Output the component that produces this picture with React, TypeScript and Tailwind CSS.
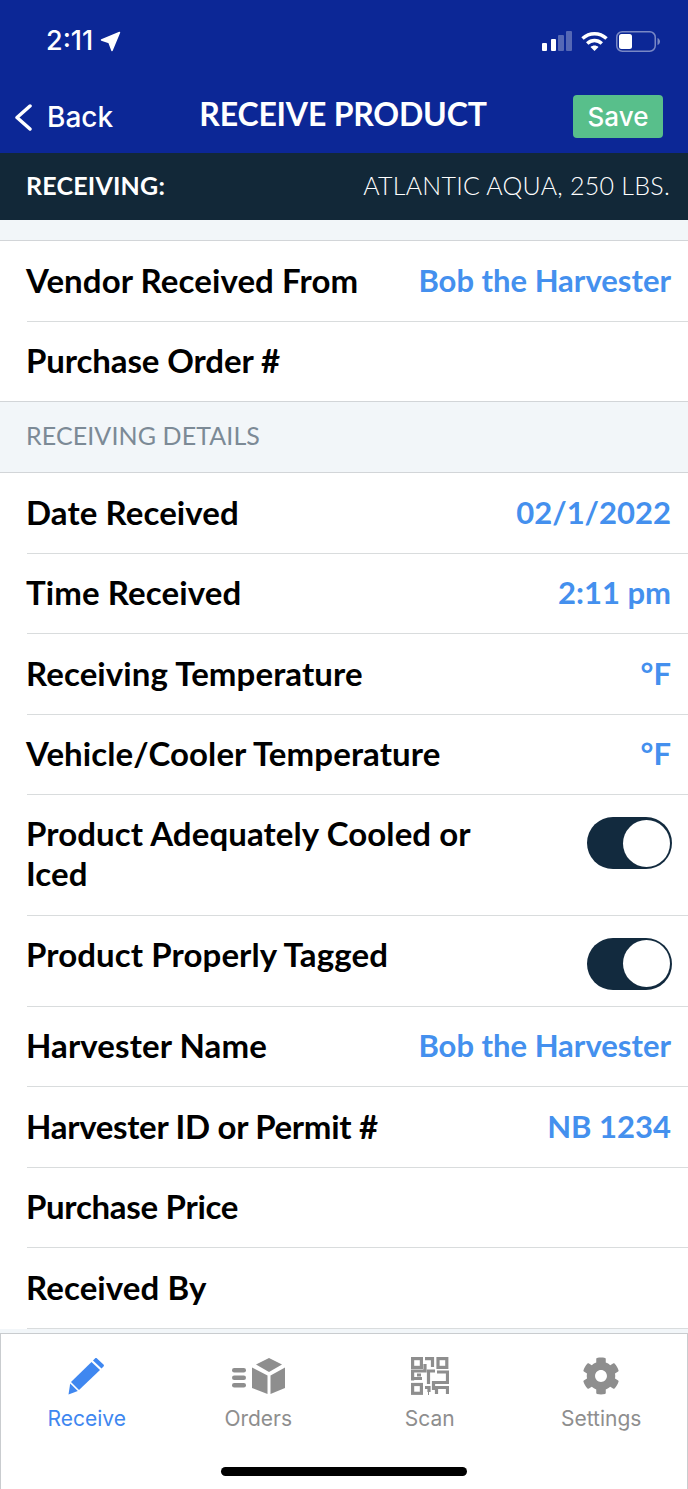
import type { ReactNode } from 'react';
import { FaCog } from 'react-icons/fa';

const sans = "font-['Lato',sans-serif]";
const ui = "font-['Inter',sans-serif]";

type Row = { label: string; value?: string; tight?: boolean };

function FormRow({ label, value, tight }: Row) {
  return (
    <div className="ml-[27px] flex h-[80.5px] items-center justify-between border-b border-[#d9dcdd] pb-[2px] pr-[17px]">
      <span className={`-ml-px text-[33px] font-bold leading-[40px] text-black ${tight ? 'tracking-[-0.3px]' : 'tracking-[0.1px]'}`}>{label}</span>
      {value ? <span className="text-[31px] font-bold leading-[40px] text-[#4490ee]">{value}</span> : null}
    </div>
  );
}

function ToggleRow({ label, height }: { label: string; height: string }) {
  return (
    <div className={`ml-[27px] flex items-start justify-between border-b border-[#d9dcdd] pr-[16px] pt-[19px] ${height}`}>
      <span className="-ml-px -mt-px w-[470px] text-[33px] font-bold leading-[40px] tracking-[0.1px] text-black">{label}</span>
      <span className="mt-[3px] flex h-[52px] w-[85px] items-center justify-end rounded-full bg-[#122a3e] pr-[2px]">
        <span className="h-[47px] w-[47px] rounded-full bg-white" />
      </span>
    </div>
  );
}

function Tab({ label, active, icon }: { label: string; active?: boolean; icon: ReactNode }) {
  return (
    <div className="flex flex-col items-center">
      <div className="flex h-[38px] items-center justify-center">{icon}</div>
      <span className={`mt-[11px] text-[21px] leading-[26px] ${ui} ${active ? 'text-[#3f87f0]' : 'text-[#8e8e8e]'}`}>{label}</span>
    </div>
  );
}

export default function App() {
  return (
    <div className={`flex h-[1489px] w-[688px] flex-col overflow-hidden bg-white ${sans}`}>
      <div className="h-[153px] bg-[#0c2796] text-white">
        <div className="flex h-[82px] items-center justify-between pl-[46px] pr-[28px]">
          <div className={`flex items-center gap-[7px] text-[27px] font-medium ${ui}`}>
            <span>2:11</span>
            <svg width="21" height="21" viewBox="0 0 21 21" fill="white" stroke="white" strokeWidth="1.5" strokeLinejoin="round"><path d="M1.500 9 19.500 1.500 12 19.500 9 11.500 Z" /></svg>
          </div>
          <div className="flex items-center gap-[8px]">
            <svg width="31" height="20" viewBox="0 0 31 20">
              <rect x="0" y="12" width="5" height="8" rx="1" fill="white" />
              <rect x="9" y="8" width="5" height="12" rx="1" fill="white" />
              <rect x="16" y="4" width="6" height="16" rx="1" fill="white" fillOpacity="0.3" />
              <rect x="24" y="0" width="6" height="20" rx="1" fill="white" fillOpacity="0.3" />
            </svg>
            <svg width="27" height="20" viewBox="0 0 27 20" fill="none" stroke="white" strokeWidth="3.5">
              <path d="M1.500 7.500c7-6.500 17-6.500 24 0" />
              <path d="M6.200 12.500c4.300-4 10.300-4 14.600 0" />
              <path d="M13.500 20 9.500 16c2.400-2 5.600-2 8 0Z" fill="white" stroke="none" />
            </svg>
            <svg width="44" height="21" viewBox="0 0 44 21">
              <rect x="0.750" y="0.750" width="38.500" height="19.500" rx="5.500" fill="none" stroke="white" strokeOpacity="0.45" strokeWidth="1.500" />
              <rect x="3" y="3" width="13" height="15" rx="2.500" fill="white" />
              <path d="M41.500 7v7c1.500-.5 2.500-2 2.500-3.500S43 7.500 41.500 7Z" fill="white" fillOpacity="0.45" />
            </svg>
          </div>
        </div>
        <div className="flex h-[71px] items-start justify-between pl-[14px] pr-[25px] pt-[13px]">
          <div className="flex w-[169px] items-center gap-[15px] pt-[5px]">
            <svg width="18" height="27" viewBox="0 0 18 27" fill="none" stroke="white" strokeWidth="3.500" strokeLinecap="round" strokeLinejoin="round"><path d="M16 2 3 13.500 16 25" /></svg>
            <span className={`text-[28px] font-medium leading-[34px] ${ui}`}>Back</span>
          </div>
          <span className="-mt-px text-[32px] font-bold leading-[40px] tracking-[-0.2px]">RECEIVE PRODUCT</span>
          <div className="flex w-[160px] justify-end">
            <button type="button" className={`h-[43px] w-[90px] rounded-[4px] bg-[#58bf8b] text-[26px] font-medium ${ui}`}>Save</button>
          </div>
        </div>
      </div>

      <div className="flex h-[67px] items-center justify-between bg-[#122838] pb-[2px] pl-[26px] pr-[18px] text-[25px] text-white">
        <span className="font-bold tracking-[0.2px]">RECEIVING:</span>
        <span className="font-light tracking-[0.25px]">ATLANTIC AQUA, 250 LBS.</span>
      </div>

      <div className="h-[21px] border-b border-[#d2d5d8] bg-[#f2f6f9]" />
      <FormRow label="Vendor Received From" value="Bob the Harvester" />
      <div className="flex h-[79.5px] items-center pb-[2px]">
        <span className="pl-[26px] text-[33px] font-bold leading-[40px] tracking-[-0.1px] text-black">Purchase Order #</span>
      </div>
      <div className="flex h-[72px] items-center border-y border-[#d2d5d8] bg-[#f2f6f9] pb-[3px] pl-[26px] text-[25px] tracking-[0.1px] text-[#7c8a96]">RECEIVING DETAILS</div>
      <FormRow label="Date Received" value="02/1/2022" />
      <FormRow label="Time Received" value="2:11 pm" />
      <FormRow label="Receiving Temperature" value="°F" />
      <FormRow label="Vehicle/Cooler Temperature" value="°F" />
      <ToggleRow label="Product Adequately Cooled or Iced" height="h-[120.5px]" />
      <ToggleRow label="Product Properly Tagged" height="h-[91px]" />
      <FormRow label="Harvester Name" value="Bob the Harvester" />
      <FormRow label="Harvester ID or Permit #" value="NB 1234" tight />
      <FormRow label="Purchase Price" tight />
      <FormRow label="Received By" />
      <div className="h-[4px] bg-[#f2f6f9]" />

      <div className="relative flex-1 border-x border-t border-[#c9cccf] bg-white">
        <div className="grid grid-cols-4 pt-[23px]">
          <Tab
            label="Receive"
            active
            icon={
              <svg width="38" height="38" viewBox="0 0 38 38" fill="#3f87f0">
                <path d="M27 1.500c.6-.6 1.400-.6 2 0l6.500 6c.6.600.6 1.400 0 2L33.500 11.500 25 3.500Z" />
                <path d="M23.500 5 32 13 11 33 3 25Z" />
                <path d="M2.200 26.500 9.800 34 .5 37.500Z" />
              </svg>
            }
          />
          <Tab
            label="Orders"
            icon={
              <svg width="54" height="38" viewBox="0 0 54 38" fill="#8e8e8e">
                <rect x="1" y="11" width="14" height="4.500" rx="2.200" />
                <rect x="1" y="18.500" width="14" height="4.500" rx="2.200" />
                <rect x="1" y="26" width="14" height="4.500" rx="2.200" />
                <path d="M38 1 51 7.500 38 15 25 7.500Z" />
                <path d="M21 10.500 36.500 18.500V37L21 31Z" />
                <path d="M54 10.500 39.500 18.500V37L54 31Z" />
              </svg>
            }
          />
          <Tab
            label="Scan"
            icon={
              <svg width="38" height="38" viewBox="0 0 38 38" fill="none" stroke="#8e8e8e" strokeWidth="3.2">
                <rect x="1.600" y="1.600" width="8.800" height="8.800" />
                <rect x="27" y="1.600" width="8.800" height="8.800" />
                <rect x="1.600" y="27.500" width="8.800" height="8.800" />
                <path d="M14 1.600H21.500V10M1.600 23.500V14H14V7M17.500 27V14H24M26 15H36.500V25.500H22.500V33M1 21.500H11M14 30.500H18V35M25.500 37V30.500H36.500V37M6 18h4M17 36.500h1" />
              </svg>
            }
          />
          <Tab label="Settings" icon={<FaCog size={38} color="#8e8e8e" />} />
        </div>
        <div className="absolute bottom-[13px] left-[220px] h-[9px] w-[246px] rounded-full bg-black" />
      </div>
    </div>
  );
}
